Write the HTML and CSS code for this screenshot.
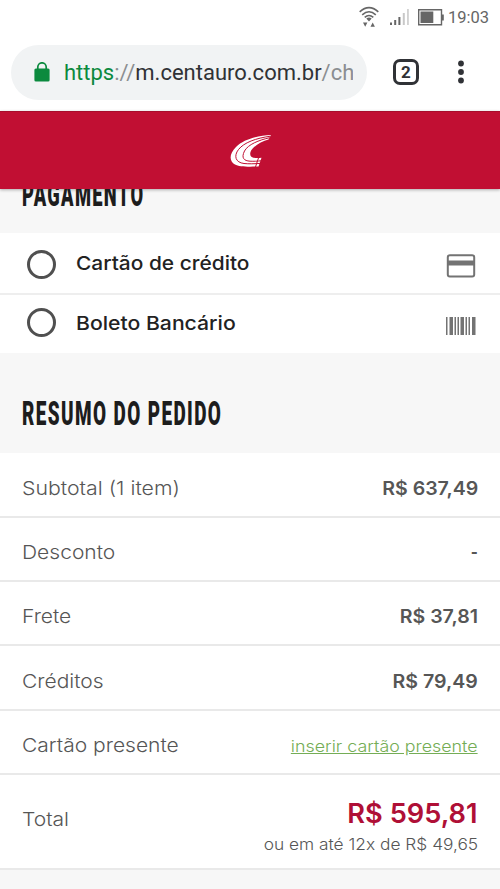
FILE: index.html
```html
<!DOCTYPE html>
<html lang="pt-BR">
<head>
<meta charset="utf-8">
<title>Centauro</title>
<link rel="stylesheet" href="styles.css">
</head>
<body>
<div class="status">
  <svg class="wifi" width="20" height="22" viewBox="0 0 20 22" fill="none" stroke="#666" stroke-width="1.6">
    <path d="M.7 5.8Q10-2.6 19.300 5.800M3.200 8.800Q10 2.700 16.800 8.800M5.700 11.400Q10 7.600 14.300 11.400"/>
    <path d="M7.300 12.400Q10 10.600 12.700 12.400L10 15.400ZM4 16.500H8.400L6.200 20.800ZM11.500 20.800H15.900L13.700 16.500Z" fill="#666" stroke="none"/>
  </svg>
  <svg class="signal" width="20" height="18" viewBox="0 0 20 18">
    <path d="M0 14.500h2v2.500H0zM4.200 12h2v5h-2zM8.400 9h2v8h-2z" fill="#666"/>
    <path d="M12.800 5h2v12h-2zM17.200 1h1.500v16h-1.500z" fill="#c8c8c8"/>
  </svg>
  <svg class="battery" width="26" height="17" viewBox="0 0 26 17">
    <path d="M.7.700H23.500V15.800H.7Z" fill="#fff" stroke="#666" stroke-width="1.400"/>
    <path d="M2.500 2.500H15.300V14H2.500ZM24 5.500h1.800v6h-1.800z" fill="#666"/>
  </svg>
  <span class="clock">19:03</span>
</div>
<div class="toolbar">
  <div class="address">
    <svg class="lock" width="16" height="20" viewBox="0 0 16 20">
      <path d="M3.800 8V5a4.200 4.200 0 0 1 8.400 0v3" fill="none" stroke="#0b8a3e" stroke-width="1.700"/>
      <rect x=".4" y="6.600" width="15.200" height="13" rx="1.500" fill="#0b8a3e"/>
    </svg>
    <div class="url"><span class="secure">https</span><span class="dim">://</span>m.centauro.com.br<span class="dim">/ch</span></div>
  </div>
  <div class="tabs">2</div>
  <svg class="more" width="6" height="24" viewBox="0 0 6 24" fill="#303236"><circle cx="3" cy="3.500" r="2.900"/><circle cx="3" cy="12" r="2.900"/><circle cx="3" cy="20.500" r="2.900"/></svg>
</div>
<header class="brand">
  <svg width="42" height="34" viewBox="0 0 42 34">
    <path d="M41 1C29 1.500 14 5 6 13C-1 20-1 27 5 30.500C9 32.800 18 33 28.500 32.500L31.500 23.700C23 24.700 19 23 20.500 18C22 13 31 7.500 38.500 5.500Z" fill="#fff"/>
    <path d="M40.500 2.200C26 4.200 14 8.500 8.500 15.500C3.500 22 5.500 28.500 14 29.500C19 30 24 29.800 31 29.400M39.800 3.700C29 6 18 10.500 14.500 17C11 24 14 26.800 20 27.200C24 27.400 27 27.200 31.500 26.800M28.800 23L25.300 33.500" fill="none" stroke="#c10f33" stroke-width="1"/>
  </svg>
</header>
<main>
  <div class="heading heading-payment"><h2>PAGAMENTO</h2></div>
  <section class="options">
    <label class="option"><span class="radio"></span><span class="name">Cartão de crédito</span>
      <svg width="30" height="24" viewBox="0 0 30 24"><rect x="1.800" y="1.300" width="26.400" height="21.200" rx="2" fill="none" stroke="#737373" stroke-width="2"/><path d="M1.500 6.500H28.500V11.500H1.500Z" fill="#737373"/></svg>
    </label>
    <label class="option"><span class="radio"></span><span class="name boleto">Boleto Bancário</span>
      <svg width="30" height="18" viewBox="0 0 30 18" fill="#737373"><path d="M0 0h1.500v18H0zM3.500 0h3.500v18H3.500zM8.500 0h1.500v18H8.500zM11.500 0h1.500v18h-1.500zM14.500 0h3.500v18h-3.500zM19.500 0h1.500v18h-1.500zM22.500 0h1.500v18h-1.500zM26 0h3.500v18H26z"/></svg>
    </label>
  </section>
  <div class="heading heading-summary"><h2>RESUMO DO PEDIDO</h2></div>
  <section class="summary">
    <div class="row"><span class="label subtotal">Subtotal (1 item)</span><span class="value">R$ 637,49</span></div>
    <div class="row"><span class="label">Desconto</span><span class="value dash">-</span></div>
    <div class="row"><span class="label">Frete</span><span class="value">R$ 37,81</span></div>
    <div class="row"><span class="label">Créditos</span><span class="value">R$ 79,49</span></div>
    <div class="row"><span class="label">Cartão presente</span><a class="gift">inserir cartão presente</a></div>
    <div class="row total"><span class="label">Total</span>
      <div class="amount"><strong>R$ 595,81</strong><span class="installments">ou em até 12x de R$ 49,65</span></div>
    </div>
  </section>
</main>
</body>
</html>
```
FILE: styles.css
```css
* { box-sizing: border-box; }
body { margin: 0; width: 500px; height: 889px; overflow: hidden; background: #f7f7f7; color: #565656; font-family: Inter, sans-serif; }
svg { display: block; flex: none; }
.status { height: 34px; display: flex; align-items: center; background: #fff; padding-left: 359px; }
.signal { margin-left: 11px; }
.battery { margin-left: 8px; }
.clock { margin: 1px 0 0 4px; font: 16.500px/34px Roboto, sans-serif; color: #666; white-space: nowrap; }
.toolbar { height: 77px; display: flex; align-items: center; background: #fff; padding: 0 0 1px 11px; }
.address { width: 356px; height: 55px; border-radius: 28px; background: #f1f3f4; display: flex; align-items: center; padding-left: 23px; }
.url { width: 289px; overflow: hidden; margin: 1px 0 0 14px; font: 22px/30px Roboto, sans-serif; color: #303236; white-space: nowrap; }
.secure { color: #0b8a3e; }
.dim { color: #8b8e91; }
.tabs { width: 26px; height: 26px; margin-left: 26px; border: 3px solid #303236; border-radius: 7px; font: bold 17px/21px Roboto, sans-serif; color: #303236; text-align: center; }
.more { margin-left: 39px; }
.brand { height: 78px; background: #c10f33; display: flex; align-items: center; padding-left: 230px; position: relative; box-shadow: 0 1px 3px rgba(0,0,0,.3); border-top: 1px solid #a80d2c; }
.heading { overflow: hidden; padding-left: 22px; }
h2 { margin: 0; display: inline-block; font: 900 34px/40px Roboto, sans-serif; letter-spacing: 2.500px; color: #1d1d1d; transform: scaleX(.557); transform-origin: left; white-space: nowrap; }
.heading-payment { height: 44px; }
.heading-payment h2 { margin-top: -15px; transform: scaleX(.538); }
.heading-summary { height: 100px; padding-top: 40px; }
.options, .summary { background: #fff; }
.option { height: 60px; display: flex; align-items: center; padding: 4px 24px 0 27px; }
.option + .option { border-top: 2px solid #eee; padding-top: 0; }
.option svg { margin-top: 2px; }
.option + .option svg { margin-top: 3px; }
.radio { width: 29px; height: 29px; margin-top: -2px; border: 3px solid #505050; border-radius: 50%; }
.option + .option .radio { margin-top: -4px; }
.name { margin: -4px auto 0 20px; font-size: 19px; font-weight: 550; color: #222; transform: scaleX(1.100); transform-origin: left; }
.boleto { margin-top: -2px; transform: scaleX(1.115); }
.row { height: 64.400px; padding: 7px 22px 0; border-bottom: 2px solid #e9e9e9; display: flex; align-items: center; justify-content: space-between; white-space: nowrap; }
.row:first-child { height: 64.600px; padding-top: 8px; }
.label { font-size: 19px; font-weight: 300; transform: scaleX(1.106); transform-origin: left; }
.subtotal { transform: scaleX(1.120); }
.value { font-size: 19px; font-weight: 600; transform: scaleX(1.030); transform-origin: right; }
.dash { transform: scaleX(.8); }
.gift { font-size: 16.500px; font-weight: 350; color: #74ad55; text-decoration: underline; margin-top: 1px; transform: scaleX(1.082); transform-origin: right; }
.total { height: 95px; padding-top: 0; }
.total .label { margin-top: -5px; }
.amount { display: flex; flex-direction: column; align-items: flex-end; padding-top: 11px; }
.amount strong { font-size: 27.500px; line-height: 34px; font-weight: 600; color: #af0f36; transform: scaleX(.990); transform-origin: right; }
.installments { font-size: 16px; line-height: 28px; font-weight: 300; transform: scaleX(1.082); transform-origin: right; }
```
